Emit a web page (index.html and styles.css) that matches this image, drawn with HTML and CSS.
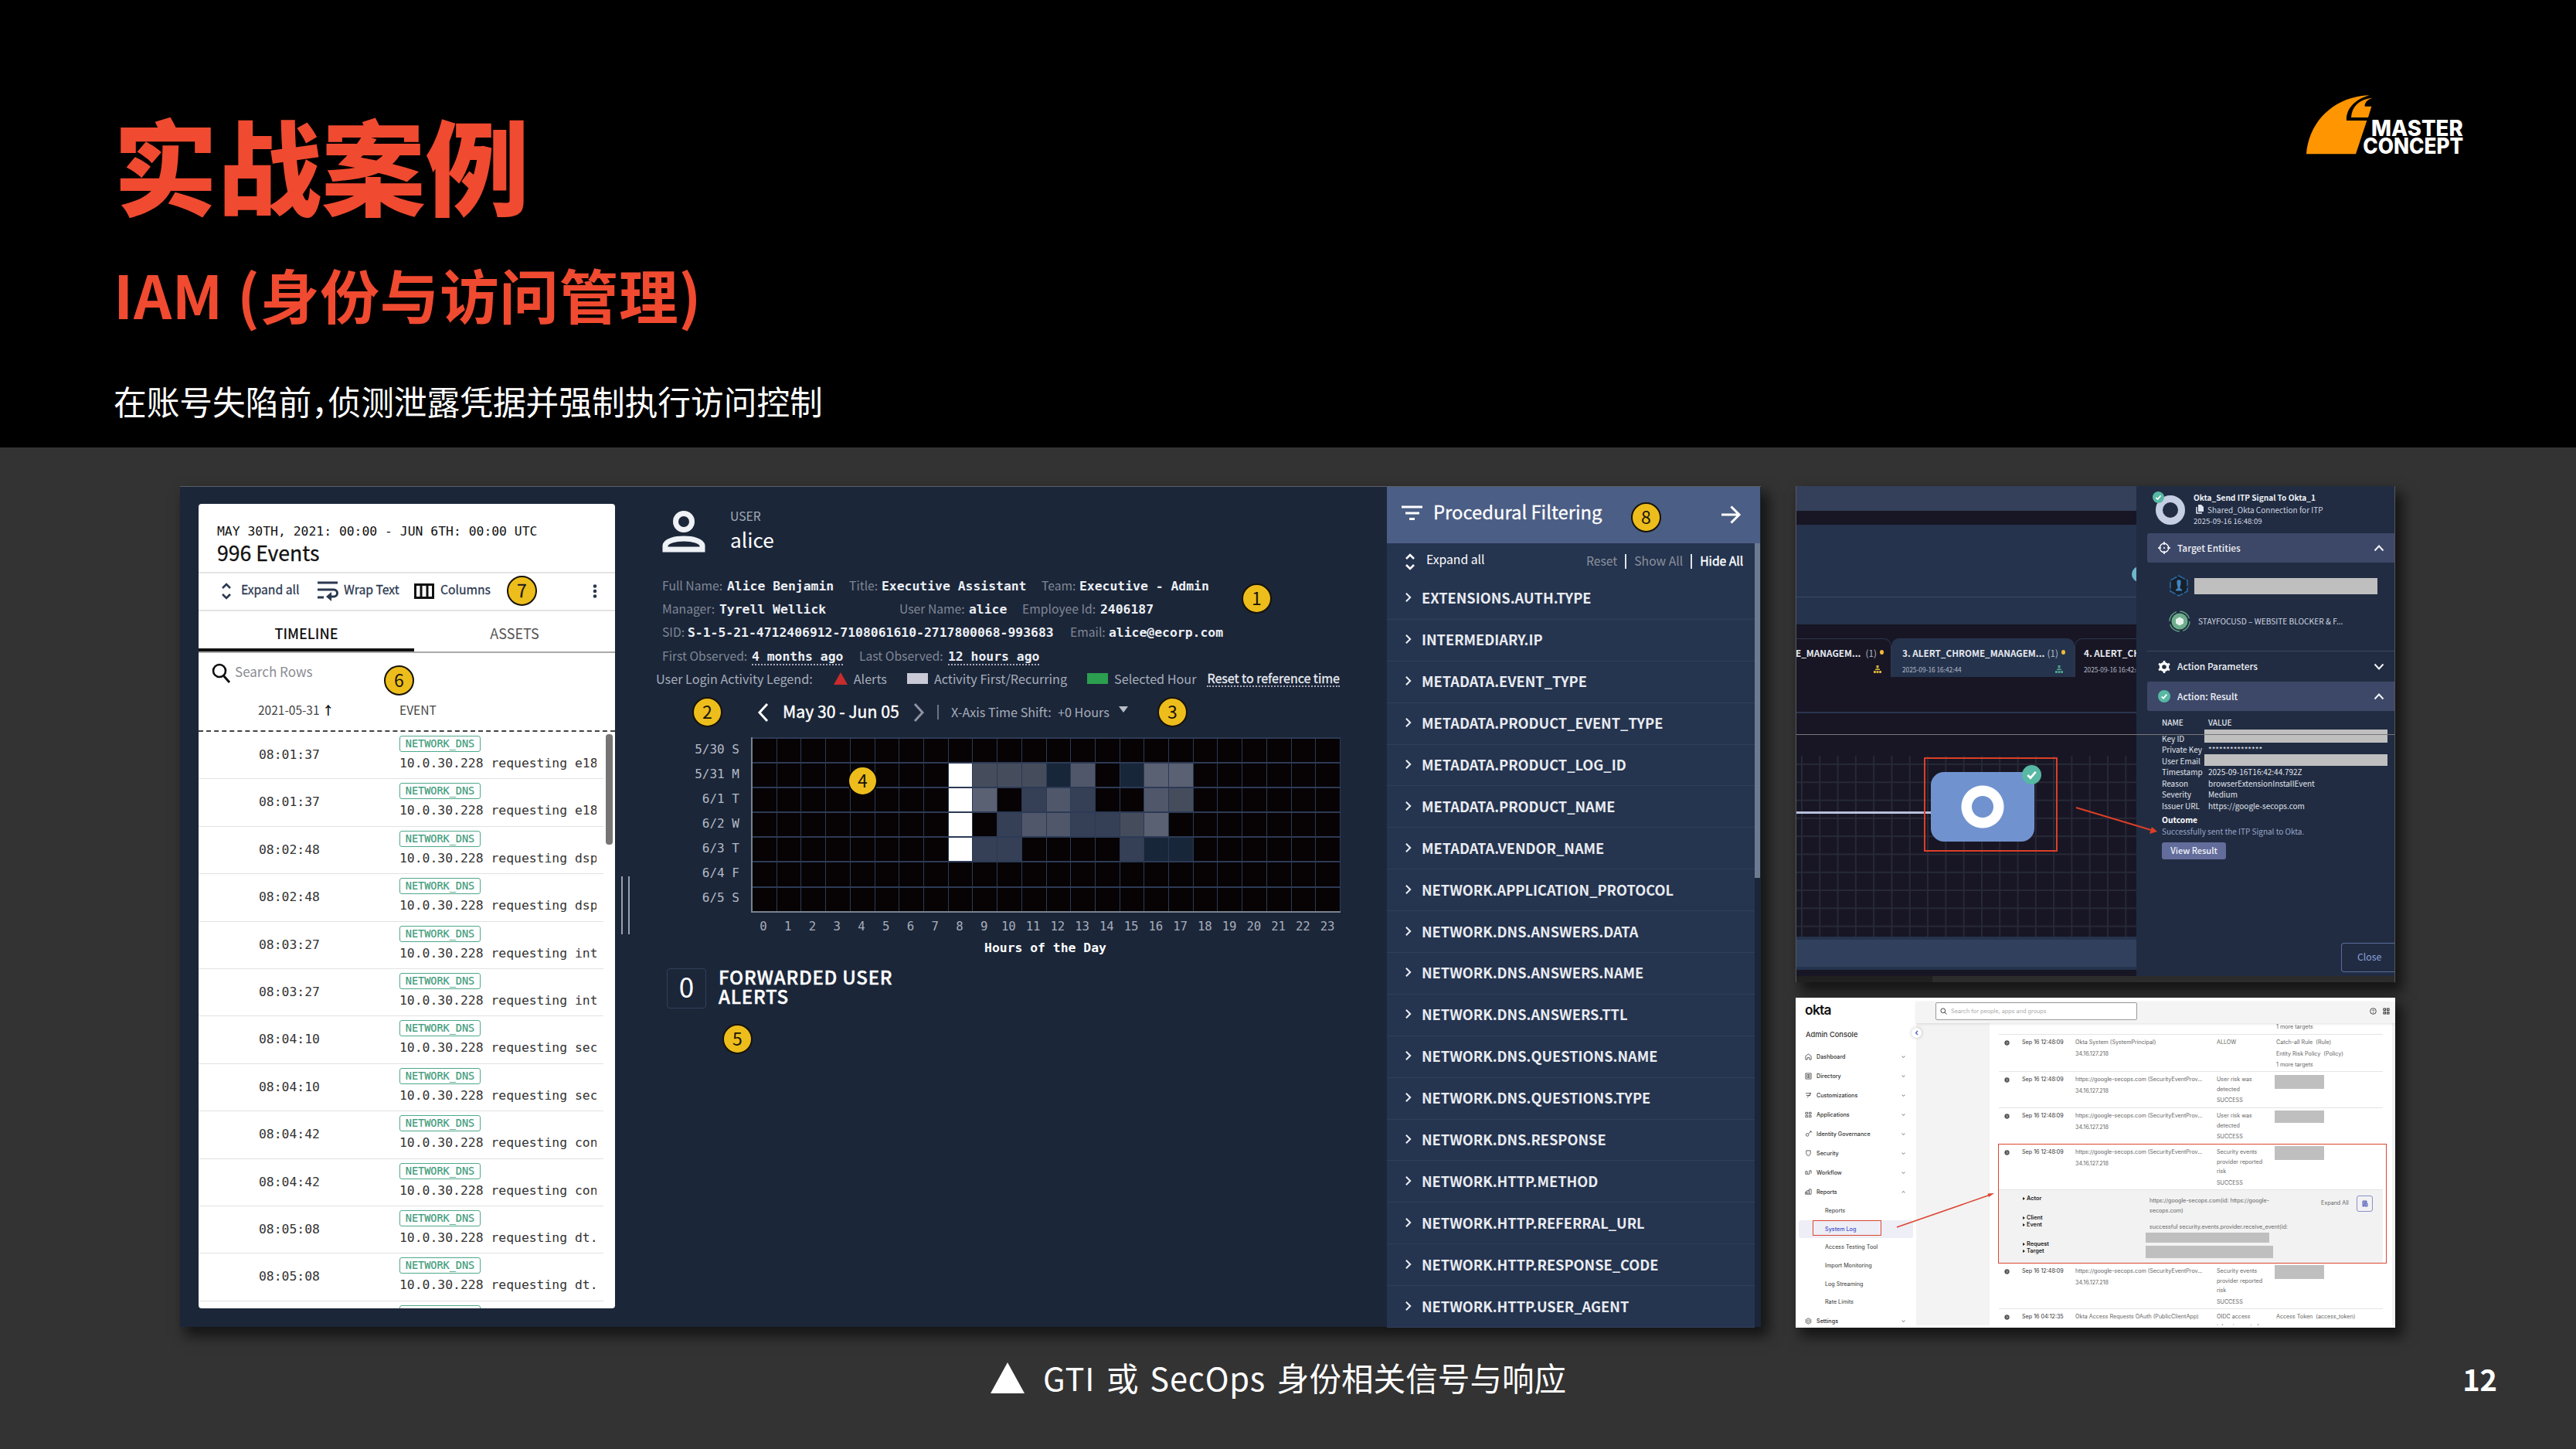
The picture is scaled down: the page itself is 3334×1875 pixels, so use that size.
FILE: index.html
```html
<!DOCTYPE html>
<html lang="zh-CN">
<head>
    <meta charset="UTF-8">
    <meta name="viewport" content="width=device-width, initial-scale=1.0">
    <title>实战案例 - IAM</title>
    <link rel="stylesheet" href="styles.css">
</head>
<body>
    <!-- Shared icons -->
    <svg class="sprite">
        <symbol id="i-expand" viewBox="0 0 14 24"><path d="M2 8l5-5 5 5M2 16l5 5 5-5" fill="none" stroke="currentColor" stroke-width="2.6"/></symbol>
        <symbol id="i-right" viewBox="0 0 10 16"><path d="M2 2l6 6-6 6" fill="none" stroke="currentColor" stroke-width="2.4"/></symbol>
        <symbol id="i-up" viewBox="0 0 14 10"><path d="M1.5 8.5L7 2.5l5.5 6" fill="none" stroke="currentColor" stroke-width="2"/></symbol>
        <symbol id="i-down" viewBox="0 0 14 10"><path d="M1.5 1.5L7 7.5l5.5-6" fill="none" stroke="currentColor" stroke-width="2"/></symbol>
        <symbol id="i-check" viewBox="0 0 24 24"><circle cx="12" cy="12" r="12" fill="#57b8a4"/><path d="M7 12.5l3.5 3.5L17 8.5" fill="none" stroke="#fff" stroke-width="2.6"/></symbol>
        <symbol id="i-tree" viewBox="0 0 10 10"><path d="M3.5 0h3v3h-3zM4.5 3h1v2h-1zM2 4.5h6V6H2zM0 7h2.8v3H0zM3.6 7h2.8v3H3.6zM7.2 7H10v3H7.2z" fill="currentColor"/></symbol>
        <symbol id="i-dot" viewBox="0 0 8 8"><circle cx="4" cy="4" r="3.6" fill="#555"/><path d="M3.3 2.4L5 4 3.3 5.6" fill="none" stroke="#fff" stroke-width=".8"/></symbol>
    </svg>

    <!-- Slide header -->
    <header class="header">
        <div>
            <h1>实战案例</h1>
            <h2>IAM (身份与访问管理)</h2>
            <p>在账号失陷前<span class="comma">，</span>侦测泄露凭据并强制执行访问控制</p>
        </div>
        <svg class="logo" viewBox="0 0 612 231">
            <path d="M0 229C10 100 110 5 245 1C190 15 152 55 156 99H235L192 229Z" fill="#ff9500"/>
            <path d="M174 87C176 45 205 15 258 11C238 17 226 28 227 44H253L240 87Z" fill="#ff9500"/>
            <text x="252" y="160" class="logo-text" textLength="356" lengthAdjust="spacingAndGlyphs">MASTER</text>
            <text x="220" y="229" class="logo-text" textLength="390" lengthAdjust="spacingAndGlyphs">CONCEPT</text>
        </svg>
    </header>

    <main class="stage">
        <!-- User investigation view -->
        <section class="panel user-view">
            <div class="events">
                <div class="events-head">
                    <div class="range">MAY 30TH, 2021: 00:00 - JUN 6TH: 00:00 UTC</div>
                    <div class="count">996 Events</div>
                </div>
                <div class="toolbar">
                    <svg width="14" height="24"><use href="#i-expand"/></svg>
                    <span class="t1">Expand all</span>
                    <svg width="27" height="28" viewBox="0 0 27 28"><path d="M0 3h26M0 12h21a4.5 4.5 0 0 1 0 9h-6M0 22h8" fill="none" stroke="currentColor" stroke-width="3"/><path d="M18 15v12l-7-6z" fill="currentColor"/></svg>
                    <span class="t2">Wrap Text</span>
                    <svg width="26" height="20" viewBox="0 0 26 20"><path d="M1.5 1.5h23v17h-23zM9 1v18M17 1v18" fill="none" stroke="#111" stroke-width="3"/></svg>
                    <span class="t3">Columns</span>
                    <b class="mark">7</b>
                    <svg class="more" width="6" height="18"><circle cx="3" cy="2.5" r="2.3"/><circle cx="3" cy="9" r="2.3"/><circle cx="3" cy="15.5" r="2.3"/></svg>
                </div>
                <div class="tabs"><div class="tab active">TIMELINE</div><div class="tab">ASSETS</div></div>
                <div class="search">
                    <svg width="25" height="27" viewBox="0 0 25 27"><circle cx="10" cy="10" r="8" fill="none" stroke="#111" stroke-width="2.6"/><path d="M15 16l8 9" stroke="#111" stroke-width="3"/></svg>
                    <span>Search Rows</span>
                    <b class="mark mark-6">6</b>
                </div>
                <div class="cols"><span>2021-05-31 <b>↑</b></span><span>EVENT</span></div>
                <div class="event-list" id="event-list"></div>
                <div class="scroll-thumb"></div>
            </div>

            <div class="drag"></div>

            <div class="profile">
                <div class="who">
                    <svg width="56" height="56" viewBox="0 0 56 56"><circle cx="28" cy="14" r="10.5" fill="none" stroke="#eef1f5" stroke-width="7"/><path d="M4 50V45C6 33 50 33 52 45V50Z" fill="none" stroke="#eef1f5" stroke-width="7"/></svg>
                    <div><div class="kind">USER</div><div class="name">alice</div></div>
                </div>
                <div class="facts f1"><i>Full Name:</i><b>Alice Benjamin</b><i>Title:</i><b>Executive Assistant</b><i>Team:</i><b>Executive - Admin</b></div>
                <div class="facts f2"><i>Manager:</i><b>Tyrell Wellick</b><i>User Name:</i><b>alice</b><i>Employee Id:</i><b>2406187</b></div>
                <div class="facts f3"><i>SID:</i><b>S-1-5-21-4712406912-7108061610-2717800068-993683</b><i>Email:</i><b>alice@ecorp.com</b></div>
                <div class="facts f4"><i>First Observed:</i><b><u>4 months ago</u></b><i>Last Observed:</i><b><u>12 hours ago</u></b></div>
                <div class="legend">
                    <span>User Login Activity Legend:</span>
                    <em class="tri"></em><span>Alerts</span>
                    <em class="sq"></em><span>Activity First/Recurring</span>
                    <em class="sq green"></em><span>Selected Hour</span>
                    <u>Reset to reference time</u>
                </div>
                <div class="nav">
                    <b class="mark">2</b>
                    <svg width="16" height="26" viewBox="0 0 16 26"><path d="M13 2L3 13l10 11" fill="none" stroke="#fff" stroke-width="3"/></svg>
                    <span class="week">May 30 - Jun 05</span>
                    <svg width="16" height="26" viewBox="0 0 16 26"><path d="M3 2l10 11L3 24" fill="none" stroke="#8d93a0" stroke-width="3"/></svg>
                    <span class="bar"></span>
                    <span class="shift">X-Axis Time Shift:</span><span class="hours">+0 Hours</span>
                    <em class="caret"></em>
                    <b class="mark">3</b>
                </div>
                <div class="chart">
                    <div class="days"><span>5/30 S</span><span>5/31 M</span><span>6/1 T</span><span>6/2 W</span><span>6/3 T</span><span>6/4 F</span><span>6/5 S</span></div>
                    <div class="heat" id="heat"></div>
                </div>
                <div class="axis" id="axis"></div>
                <div class="axis-title">Hours of the Day</div>
                <div class="alerts"><div class="zero">0</div><div class="alerts-text">FORWARDED USER<br>ALERTS</div></div>
                <b class="mark mark-5">5</b>
                <b class="mark mark-1">1</b>
                <b class="mark mark-4">4</b>
            </div>

            <div class="filters">
                <div class="filters-head">
                    <svg width="28" height="20" viewBox="0 0 28 20"><path d="M0 2h27M5 10h18M10 17.500h7" stroke="#fff" stroke-width="3"/></svg>
                    <span>Procedural Filtering</span>
                    <b class="mark">8</b>
                    <svg class="arrow" width="26" height="24" viewBox="0 0 26 24"><path d="M0 12h23M12.500 1.500L23 12 12.500 22.500" fill="none" stroke="#fff" stroke-width="3"/></svg>
                </div>
                <div class="filters-bar">
                    <svg width="14" height="24"><use href="#i-expand"/></svg>
                    <span class="all">Expand all</span>
                    <span class="dim">Reset</span><s></s><span class="dim">Show All</span><s></s><span class="hide">Hide All</span>
                </div>
                <div id="filter-list"></div>
                <div class="filters-thumb"></div>
            </div>
        </section>

        <div class="side">
            <!-- Playbook view -->
            <section class="panel playbook">
                <div class="flow">
                    <div class="band top"></div>
                    <div class="band gap"></div>
                    <div class="band upper"></div>
                    <div class="band lower"></div>
                    <div class="alert-tabs">
                        <div class="atab first"><div><span>E_MANAGEM...</span><i>(1)</i><em></em></div><div><svg class="yellow" width="10" height="10"><use href="#i-tree"/></svg></div></div>
                        <div class="atab on"><div><span>3. ALERT_CHROME_MANAGEM...</span><i>(1)</i><em></em></div><div><small>2025-09-16 16:42:44</small><svg class="teal" width="10" height="10"><use href="#i-tree"/></svg></div></div>
                        <div class="atab last"><div><span>4. ALERT_CHROME</span></div><div><small>2025-09-16 16:42:44</small></div></div>
                    </div>
                    <div class="canvas-head"></div>
                    <div class="canvas">
                        <div class="wire"></div>
                        <div class="node"><svg class="node-check" width="25" height="25"><use href="#i-check"/></svg></div>
                        <div class="node-frame"></div>
                    </div>
                    <div class="band bottom"></div>
                    <div class="bubble"></div>
                </div>
                <div class="detail">
                    <div class="detail-head">
                        <div class="ring"><svg width="15" height="15"><use href="#i-check"/></svg></div>
                        <div>
                            <strong>Okta_Send ITP Signal To Okta_1</strong>
                            <div class="shared"><svg width="10" height="12" viewBox="0 0 10 12"><path d="M3 0h4l3 3v6H3z" fill="#dfe5f1"/><path d="M1 3v8h7" fill="none" stroke="#dfe5f1" stroke-width="1.500"/></svg>Shared_Okta Connection for ITP</div>
                            <div>2025-09-16 16:48:09</div>
                        </div>
                    </div>
                    <div class="bar-row lit">
                        <svg width="16" height="18" viewBox="0 0 16 18"><circle cx="8" cy="9" r="5.800" fill="none" stroke="#fff" stroke-width="1.400"/><path d="M8 1v4M8 13v4M0 9h4M12 9h4M7 9h2" stroke="#fff" stroke-width="1.600"/></svg>
                        <span>Target Entities</span><svg class="chev" width="14" height="10"><use href="#i-up"/></svg>
                    </div>
                    <div class="entities">
                        <div class="entity">
                            <svg width="26" height="28" viewBox="0 0 26 28"><path d="M13 1l11 6v14l-11 6-11-6V7z" fill="#142233" stroke="#2e6da4" stroke-width="1.500" stroke-dasharray="9 2"/><path d="M13 4l8 4.500v11L13 24l-8-4.500v-11z" fill="#1a2026"/><path d="M10.500 7.500q2.500-2.500 5 0v4l-1.200 5.500 2.700 2v1.500H9V19l2.700-2-1.200-5.500z" fill="#3f86c4"/></svg>
                            <div class="mask m1"></div>
                        </div>
                        <div class="entity">
                            <svg width="28" height="30" viewBox="0 0 28 30"><circle cx="14" cy="15" r="10.500" fill="#6fae8c"/><circle cx="14" cy="15" r="13" fill="none" stroke="#5fa57f" stroke-width="1.400" stroke-dasharray="16 4.400"/><path d="M14 9.500l5 2.800v5.400L14 20.500l-5-2.800v-5.400z" fill="#e6f3ec"/></svg>
                            <span>STAYFOCUSD – WEBSITE BLOCKER &amp; F...</span>
                        </div>
                    </div>
                    <div class="bar-row">
                        <svg width="16" height="18" viewBox="0 0 16 18"><circle cx="8" cy="9" r="4.500" fill="none" stroke="#fff" stroke-width="3.400"/><path d="M8 1v3M8 14v3M1 5l2.600 1.500M12.400 11.500L15 13M1 13l2.600-1.500M12.400 6.500L15 5" stroke="#fff" stroke-width="2.600"/></svg>
                        <span>Action Parameters</span><svg class="chev" width="14" height="10"><use href="#i-down"/></svg>
                    </div>
                    <div class="bar-row lit">
                        <svg width="16" height="16"><use href="#i-check"/></svg>
                        <span>Action: Result</span><svg class="chev" width="14" height="10"><use href="#i-up"/></svg>
                    </div>
                    <div class="kv">
                        <b>NAME</b><b>VALUE</b>
                        <span>Key ID</span><div class="mask m2"></div>
                        <span>Private Key</span><span>***************</span>
                        <span>User Email</span><div class="mask m3"></div>
                        <span>Timestamp</span><span>2025-09-16T16:42:44.792Z</span>
                        <span>Reason</span><span>browserExtensionInstallEvent</span>
                        <span>Severity</span><span>Medium</span>
                        <span>Issuer URL</span><span>https://google-secops.com</span>
                    </div>
                    <div class="outcome">Outcome</div>
                    <div class="sent">Successfully sent the ITP Signal to Okta.</div>
                    <div class="view">View Result</div>
                    <div class="close">Close</div>
                </div>
                <div class="foot"><div></div></div>
                <div class="hair"></div>
                <svg class="pointer p-play" width="110" height="36" viewBox="0 0 110 36"><path d="M1 1l97 29" stroke="#dc3f28" stroke-width="2"/><path d="M106 32l-10 3 3-9z" fill="#dc3f28"/></svg>
            </section>

            <!-- Okta admin console -->
            <section class="panel okta">
                <div class="okta-side">
                    <div class="okta-logo">okta</div>
                    <div class="okta-title">Admin Console</div>
                    <div class="okta-item"><svg viewBox="0 0 10 10"><path d="M1 9V4l4-3 4 3v5H6.500V6h-3v3z"/></svg>Dashboard<svg viewBox="0 0 10 10"><path d="M3 4l2 2 2-2"/></svg></div>
                    <div class="okta-item"><svg viewBox="0 0 10 10"><path d="M1 1h8v8H1zM3 3h4v4H3zM5 3v4"/></svg>Directory<svg viewBox="0 0 10 10"><path d="M3 4l2 2 2-2"/></svg></div>
                    <div class="okta-item"><svg viewBox="0 0 10 10"><path d="M1 2h8L3 8M2 5h6M7 1v2"/></svg>Customizations<svg viewBox="0 0 10 10"><path d="M3 4l2 2 2-2"/></svg></div>
                    <div class="okta-item"><svg viewBox="0 0 10 10"><path d="M1 1.500h3v2.500H1zM6 1.500h3v2.500H6zM1 6h3v2.500H1zM6 6h3v2.500H6z"/></svg>Applications<svg viewBox="0 0 10 10"><path d="M3 4l2 2 2-2"/></svg></div>
                    <div class="okta-item"><svg viewBox="0 0 10 10"><circle cx="3.500" cy="6" r="2"/><path d="M5 4.500L9 1M7 1h2v2"/></svg>Identity Governance<svg viewBox="0 0 10 10"><path d="M3 4l2 2 2-2"/></svg></div>
                    <div class="okta-item"><svg viewBox="0 0 10 10"><path d="M2 1h6v4Q8 7.500 5 8.500 2 7.500 2 5z"/></svg>Security<svg viewBox="0 0 10 10"><path d="M3 4l2 2 2-2"/></svg></div>
                    <div class="okta-item"><svg viewBox="0 0 10 10"><path d="M1 7V3h2.500v4h3V2H9v4M1 7h2"/></svg>Workflow<svg viewBox="0 0 10 10"><path d="M3 4l2 2 2-2"/></svg></div>
                    <div class="okta-item"><svg viewBox="0 0 10 10"><path d="M.5 8V5H3v3zM3 8V3h3v5zM6 8V1h3v7z"/></svg>Reports<svg viewBox="0 0 10 10"><path d="M3 6l2-2 2 2"/></svg></div>
                    <div class="okta-sub">Reports</div>
                    <div class="okta-sub on">System Log</div>
                    <div class="okta-sub">Access Testing Tool</div>
                    <div class="okta-sub">Import Monitoring</div>
                    <div class="okta-sub">Log Streaming</div>
                    <div class="okta-sub">Rate Limits</div>
                    <div class="okta-item"><svg viewBox="0 0 10 10"><path d="M5 .8l3.600 2.100v4.200L5 9.200 1.400 7.100V2.900z"/><circle cx="5" cy="5" r="1.700"/></svg>Settings<svg viewBox="0 0 10 10"><path d="M3 4l2 2 2-2"/></svg></div>
                </div>
                <div class="okta-main">
                    <div class="okta-top">
                        <div class="okta-search"><svg width="9" height="9" viewBox="0 0 9 9"><circle cx="3.800" cy="3.800" r="2.900" fill="none" stroke="#444"/><path d="M6 6l2.500 2.500" stroke="#444"/></svg>Search for people, apps and groups</div>
                        <svg class="help" width="9" height="9" viewBox="0 0 9 9"><circle cx="4.500" cy="4.500" r="3.800" fill="none" stroke="#333" stroke-width=".9"/><path d="M3.300 3.500q1.200-1.500 2.400 0 0 .8-1.200 1.500M4.500 6v1" fill="none" stroke="#333" stroke-width=".8"/></svg>
                        <svg width="9" height="9" viewBox="0 0 9 9"><path d="M1 1h2.500v2.500H1zM5.500 1H8v2.500H5.500zM1 5.500h2.500V8H1zM5.500 5.500H8V8H5.500z" fill="none" stroke="#333" stroke-width="1.100"/></svg>
                    </div>
                    <div class="log">
                        <div class="log-row r0"><div></div><div></div><div></div><div></div><div>1 more targets</div></div>
                        <div class="log-row r1"><svg><use href="#i-dot"/></svg><time>Sep 16 12:48:09</time><div class="wide">Okta System (SystemPrincipal)<br>34.16.127.218</div><div>ALLOW</div><div class="wide">Catch-all Rule&nbsp; (Rule)<br>Entity Risk Policy&nbsp; (Policy)<br>1 more targets</div></div>
                        <div class="log-row r2"><svg><use href="#i-dot"/></svg><time>Sep 16 12:48:09</time><div class="wide">https://google-secops.com (SecurityEventProv...<br>34.16.127.218</div><div>User risk was<br>detected<p>SUCCESS</p></div><div class="mask h18"></div></div>
                        <div class="log-row r3"><svg><use href="#i-dot"/></svg><time>Sep 16 12:48:09</time><div class="wide">https://google-secops.com (SecurityEventProv...<br>34.16.127.218</div><div>User risk was<br>detected<p>SUCCESS</p></div><div class="mask h16"></div></div>
                        <div class="log-row r4"><svg><use href="#i-dot"/></svg><time>Sep 16 12:48:09</time><div class="wide">https://google-secops.com (SecurityEventProv...<br>34.16.127.218</div><div>Security events<br>provider reported<br>risk<p>SUCCESS</p></div><div class="mask h18 raised"></div></div>
                        <div class="log-detail">
                            <div class="keys"><b>Actor</b><b class="far">Client</b><b>Event</b><b class="far">Request</b><b>Target</b></div>
                            <div class="vals">https://google-secops.com(id: https://google-<br>secops.com)<p>successful security.events.provider.receive_event(id:</p><div class="mask v1"></div><div class="mask v2"></div></div>
                            <span>Expand All</span>
                            <div class="copy"><svg width="8" height="9" viewBox="0 0 8 9"><path d="M1 1h5v2H3v5H1zM4 4h3v4H4z" fill="#a9afe0" stroke="#3f4db0" stroke-width=".8"/></svg></div>
                        </div>
                        <div class="log-row r5"><svg><use href="#i-dot"/></svg><time>Sep 16 12:48:09</time><div class="wide">https://google-secops.com (SecurityEventProv...<br>34.16.127.218</div><div>Security events<br>provider reported<br>risk<p>SUCCESS</p></div><div class="mask h18 raised"></div></div>
                        <div class="log-row r6"><svg><use href="#i-dot"/></svg><time>Sep 16 04:12:35</time><div class="wide">Okta Access Requests OAuth (PublicClientApp)</div><div>OIDC access<br>token is granted</div><div>Access Token&nbsp; (access_token)</div></div>
                    </div>
                </div>
                <div class="collapse"><svg width="5" height="7" viewBox="0 0 5 7"><path d="M4 1L1.500 3.500 4 6" fill="none" stroke="#3f59c4" stroke-width="1.200"/></svg></div>
                <div class="frame f-log"></div>
                <div class="frame f-menu"></div>
                <svg class="pointer p-okta" width="128" height="46" viewBox="0 0 128 46"><path d="M1 45L122 3" stroke="#dc4632" stroke-width="1.600"/><path d="M127 1l-7 5-1.500-4.500z" fill="#dc4632"/></svg>
            </section>
        </div>
    </main>

    <footer class="footer">
        <div class="caption"><svg width="46" height="42" viewBox="0 0 46 42"><path d="M23 1L45 41H1z" fill="#fff"/></svg><div><span>GTI</span> 或 <span>SecOps</span> 身份相关信号与响应</div></div>
        <div class="page">12</div>
    </footer>

    <script>
        const events = [
            ['08:01:37', 'e18'], ['08:01:37', 'e18'], ['08:02:48', 'dsp'], ['08:02:48', 'dsp'],
            ['08:03:27', 'int'], ['08:03:27', 'int'], ['08:04:10', 'sec'], ['08:04:10', 'sec'],
            ['08:04:42', 'con'], ['08:04:42', 'con'], ['08:05:08', 'dt.'], ['08:05:08', 'dt.']
        ];

        const filters = [
            'EXTENSIONS.AUTH.TYPE', 'INTERMEDIARY.IP', 'METADATA.EVENT_TYPE', 'METADATA.PRODUCT_EVENT_TYPE',
            'METADATA.PRODUCT_LOG_ID', 'METADATA.PRODUCT_NAME', 'METADATA.VENDOR_NAME',
            'NETWORK.APPLICATION_PROTOCOL', 'NETWORK.DNS.ANSWERS.DATA', 'NETWORK.DNS.ANSWERS.NAME',
            'NETWORK.DNS.ANSWERS.TTL', 'NETWORK.DNS.QUESTIONS.NAME', 'NETWORK.DNS.QUESTIONS.TYPE',
            'NETWORK.DNS.RESPONSE', 'NETWORK.HTTP.METHOD', 'NETWORK.HTTP.REFERRAL_URL',
            'NETWORK.HTTP.RESPONSE_CODE', 'NETWORK.HTTP.USER_AGENT'
        ];

        // activity level per hour, 0 = none, 6 = first seen
        const levels = [
            '000000000000000000000000',
            '000000006333140155000000',
            '000000006502420043000000',
            '000000006024422350000000',
            '000000006220000211000000',
            '000000000000000000000000',
            '000000000000000000000000'
        ];

        document.getElementById('event-list').innerHTML = events.map(e => `
            <div class="event">
                <time>${e[0]}</time>
                <div><span class="tag">NETWORK_DNS</span><p>10.0.30.228 requesting ${e[1]}</p></div>
            </div>`).join('') + '<div class="event"><time></time><div><span class="tag"></span></div></div>';

        document.getElementById('filter-list').innerHTML = filters.map(f => `
            <div class="filter"><svg width="9" height="14"><use href="#i-right"/></svg>${f}</div>`).join('');

        document.getElementById('heat').innerHTML = levels.join('').split('').map(l => `<i class="l${l}"></i>`).join('');
        document.getElementById('axis').innerHTML = levels[0].split('').map((l, i) => `<span>${i}</span>`).join('');
    </script>
</body>
</html>
```
FILE: styles.css
```css
* {
    box-sizing: border-box;
}
body {
    margin: 0;
    width: 3334px;
    height: 1875px;
    overflow: hidden;
    background: #333;
    color: #fff;
    font-family: "Noto Sans CJK SC", sans-serif;
}
h1, h2, p {
    margin: 0;
}
i, em {
    font-style: normal;
}
svg {
    display: block;
    flex: none;
}
.sprite {
    position: absolute;
    width: 0;
    height: 0;
}

/* header */
.header {
    display: flex;
    justify-content: space-between;
    height: 579px;
    padding: 121px 145px 0 147px;
    background: #000;
}
h1 {
    font-size: 134.5px;
    line-height: 180px;
    font-weight: 900;
    color: #f04a30;
}
h2 {
    margin-top: 19px;
    font-size: 76.7px;
    line-height: 120px;
    font-weight: 700;
    letter-spacing: .7px;
    color: #f04a30;
}
.header p {
    margin-top: 48px;
    font-size: 42.7px;
    line-height: 60px;
}
.comma {
    letter-spacing: -0.5em;
}
.logo {
    width: 204px;
    height: 77px;
    margin-top: 2px;
}
.logo-text {
    font-family: Inter, sans-serif;
    font-weight: 800;
    font-size: 84px;
    fill: #fff;
}

/* panels */
.stage {
    display: flex;
    gap: 45px;
    padding: 50px 0 0 233px;
    height: 1140px;
}
.panel {
    position: relative;
    display: flex;
    box-shadow: 8px 10px 16px 2px rgba(0, 0, 0, .6);
}
.user-view {
    width: 2046px;
    height: 1088px;
    padding: 22px 0 0 24px;
    background: #1b2639;
    border-top: 1px solid #5c6068;
}
.mark {
    display: block;
    flex: none;
    width: 39px;
    height: 39px;
    border: 2px solid #171308;
    border-radius: 50%;
    background: #edbd1c;
    color: #171308;
    font-size: 23px;
    line-height: 32px;
    font-weight: 400;
    text-align: center;
}

/* event list */
.events {
    position: relative;
    width: 539px;
    height: 1041px;
    background: #fff;
    border-radius: 4px;
    color: #111;
    overflow: hidden;
}
.events-head {
    height: 90px;
    padding: 23px 24px 0;
    border-bottom: 2px solid #e3e3e3;
}
.range {
    font: 16.4px/26px "DejaVu Sans Mono", monospace;
}
.count {
    font-size: 26.6px;
    line-height: 26px;
    margin-top: 1px;
    -webkit-text-stroke: .3px #111;
}
.toolbar {
    display: flex;
    align-items: center;
    height: 49px;
    padding: 0 23px 2px 29px;
    border-bottom: 2px solid #e3e3e3;
    font-size: 15.7px;
    line-height: 20px;
    color: #2b3850;
    -webkit-text-stroke: .3px #2b3850;
}
.toolbar span {
    margin-top: -3px;
}
.toolbar .t1 { margin-left: 12px; width: 99px; }
.toolbar .t2 { margin-left: 7px; width: 91px; }
.toolbar .t3 { margin-left: 8px; width: 86px; }
.more {
    margin-left: auto;
    fill: #2b3850;
}
.tabs {
    display: flex;
    height: 54px;
    border-bottom: 2px solid #aaa;
}
.tab {
    width: 260px;
    font-size: 18px;
    line-height: 56px;
    text-align: center;
    color: #555;
}
.tab.active {
    width: 279px;
    height: 52px;
    border-bottom: 4px solid #111;
    color: #111;
    font-weight: 500;
}
.search {
    position: relative;
    display: flex;
    height: 50px;
    padding: 13px 0 0 17px;
    gap: 5px;
    font-size: 17px;
    line-height: 22px;
    color: #8a8c93;
}
.mark-6 {
    position: absolute;
    left: 240px;
    top: 16px;
}
.cols {
    display: grid;
    grid-template-columns: 183px auto;
    height: 52px;
    padding: 11px 0 0 77px;
    border-bottom: 2px dashed #444;
    font-size: 15.5px;
    line-height: 24px;
    color: #444;
}
.cols b {
    color: #111;
}
.event {
    display: flex;
    width: 524px;
    height: 61.4px;
    border-bottom: 1px solid #e2e2e2;
    font: 16.4px/20px "DejaVu Sans Mono", monospace;
    color: #333;
}
.event time {
    width: 260px;
    padding: 20px 0 0 78px;
}
.event div {
    width: 255px;
    padding-top: 5px;
    overflow: hidden;
    white-space: nowrap;
}
.tag {
    display: block;
    width: 105px;
    height: 21px;
    border: 1.5px solid #4fa88a;
    border-radius: 3px;
    font-size: 13.5px;
    line-height: 19px;
    text-align: center;
    color: #3f9c7c;
    -webkit-text-stroke: .2px #3f9c7c;
}
.event p {
    margin-top: 5px;
}
.scroll-thumb {
    position: absolute;
    right: 3px;
    top: 298px;
    width: 9px;
    height: 143px;
    border-radius: 4px;
    background: #757575;
}
.drag {
    width: 11px;
    height: 75px;
    margin: 482px 32px 0 8px;
    border: solid #99a0ad;
    border-width: 0 2px;
}

/* profile */
.profile {
    position: relative;
    width: 948px;
    padding-left: 10px;
    font-size: 15.7px;
}
.who {
    display: flex;
    gap: 32px;
    height: 95px;
    padding-top: 9px;
}
.kind {
    line-height: 14px;
    color: #a3a9b4;
}
.name {
    margin-top: 8px;
    font-size: 26.3px;
    line-height: 30px;
}
.facts {
    display: grid;
    height: 30.2px;
    line-height: 22px;
    white-space: nowrap;
}
.facts i {
    color: #808896;
}
.facts b {
    font: bold 16.4px/24px "DejaVu Sans Mono", monospace;
    color: #eceff4;
}
.facts u, .legend u {
    text-decoration: none;
    border-bottom: 2px dotted #aab;
}
.f1 { grid-template-columns: 84px 158px 42px 207px 49px auto; }
.f2 { grid-template-columns: 74px 233px 90px 69px 101px auto; }
.f3 { grid-template-columns: 33px 495px 50px auto; }
.f4 { grid-template-columns: 116px 139px 115px auto; }
.legend {
    display: flex;
    align-items: center;
    height: 24px;
    margin: -2px 0 0 -8px;
    font-size: 16.2px;
    line-height: 20px;
    color: #a7adb9;
    white-space: nowrap;
}
.tri {
    margin: 0 8px 0 27px;
    border: solid transparent;
    border-width: 0 9.5px 16px;
    border-bottom-color: #c92c2c;
}
.sq {
    width: 27px;
    height: 14px;
    margin: 0 8px 0 26px;
    background: #c9cad6;
}
.green {
    background: #2b9f4f;
}
.legend u {
    margin-left: 14px;
    color: #eceff4;
    font-size: 16px;
    -webkit-text-stroke: .3px #eceff4;
}
.nav {
    display: flex;
    align-items: center;
    height: 40px;
    margin-top: 12px;
    padding-left: 39px;
}
.nav svg {
    margin-left: 45px;
}
.week {
    width: 155px;
    margin: -3px 0 0 17px;
    font-size: 21.2px;
    line-height: 30px;
    white-space: nowrap;
    -webkit-text-stroke: .4px #fff;
}
.nav .week + svg {
    margin-left: 13px;
}
.bar {
    width: 2px;
    height: 19px;
    margin: 0 16px;
    background: #6d7584;
}
.shift, .hours {
    margin-top: -2px;
    font-size: 16.2px;
    color: #a7adb9;
    width: 138px;
    white-space: nowrap;
}
.hours {
    width: 79px;
}
.caret {
    margin: -8px 38px 0 0;
    border: solid transparent;
    border-width: 8px 6.5px 0;
    border-top-color: #b9bec8;
}
.chart {
    display: flex;
    margin-top: 12px;
}
.days {
    display: flex;
    flex-direction: column;
    width: 115px;
    padding-right: 15px;
    text-align: right;
    font: 16px/32.1px "DejaVu Sans Mono", monospace;
    color: #b4bac4;
}
.heat {
    display: grid;
    grid-template-columns: repeat(24, 1fr);
    width: 763px;
    height: 227px;
    border: solid #7b828e;
    border-width: 0 0 2px 2px;
}
.heat i {
    background: #070304;
    border: solid #2c3a55;
    border-width: 2px 1px 0 0;
}
.heat .l1 { background: #18263a; }
.heat .l2 { background: #353f55; }
.heat .l3 { background: #454c5c; }
.heat .l4 { background: #50576a; }
.heat .l5 { background: #5a6173; }
.heat .l6 { background: #fff; }
.axis {
    display: grid;
    grid-template-columns: repeat(24, 1fr);
    margin-left: 115px;
    width: 762px;
    padding-top: 6px;
    text-align: center;
    font: 15.7px/24px "DejaVu Sans Mono", monospace;
    color: #a7adb9;
}
.axis-title {
    margin: 2px 0 0 115px;
    width: 762px;
    text-align: center;
    font: bold 16.4px/28px "DejaVu Sans Mono", monospace;
}
.alerts {
    display: flex;
    gap: 16px;
    margin: 12px 0 0 6px;
}
.zero {
    width: 51px;
    height: 52px;
    border: 1.5px solid #33405a;
    border-radius: 4px;
    font-size: 35px;
    line-height: 44px;
    text-align: center;
}
.alerts-text {
    margin-top: -2px;
    font-size: 24px;
    line-height: 25.7px;
    font-weight: 500;
    letter-spacing: .75px;
    -webkit-text-stroke: .4px #fff;
}
.mark-1 { position: absolute; left: 760px; top: 103px; }
.mark-4 { position: absolute; left: 250px; top: 339px; border-color: #070304; }
.mark-5 { position: absolute; left: 88px; top: 673px; }

/* procedural filtering */
.filters {
    position: relative;
    width: 483px;
    height: 1087px;
    margin-top: -22px;
    background: #25344f;
    border-right: 7px solid #1b2639;
}
.filters-head {
    display: flex;
    align-items: center;
    width: 483px;
    height: 73px;
    padding: 0 24px 5px 19px;
    background: #4b5e85;
}
.filters-head span {
    margin: -4px 0 0 13px;
    width: 256px;
    font-size: 23.8px;
    line-height: 34px;
    -webkit-text-stroke: .3px #fff;
}
.filters-head .mark {
    margin-top: 11px;
}
.arrow {
    margin: 4px 0 0 auto;
}
.filters-bar {
    display: flex;
    align-items: center;
    height: 45px;
    padding: 2px 0 0 23px;
    font-size: 15.7px;
    line-height: 20px;
}
.filters-bar span {
    margin-top: -2px;
}
.filters-bar .all {
    margin: -6px 0 0 14px;
    width: 207px;
}
.hide {
    -webkit-text-stroke: .4px #fff;
}
.dim {
    color: #8a919d;
}
.filters-bar s {
    width: 2px;
    height: 19px;
    margin: 0 10px;
    background: #dfe3ea;
}
.filter {
    display: flex;
    align-items: center;
    gap: 13px;
    height: 53.9px;
    padding: 0 0 2px 23px;
    border-bottom: 1.5px solid #304059;
    font-size: 18.2px;
    line-height: 24px;
    font-weight: 700;
    color: #e9ecf2;
}
.filters-thumb {
    position: absolute;
    right: -7px;
    top: 73px;
    width: 7px;
    height: 433px;
    background: #6c7b91;
}

/* right column */
.side {
    width: 776px;
}
.mask {
    background: #bfbfbf;
}
.playbook {
    flex-wrap: wrap;
    height: 642px;
    border: solid #55595f;
    border-width: 0 1px;
    overflow: visible;
    background: #212c42;
}
.flow {
    position: relative;
    width: 440px;
    height: 634px;
    background: #181624;
    overflow: hidden;
}
.top { height: 32px; background: #343f5a; }
.gap { height: 18px; }
.upper { height: 94px; background: #25334d; border-bottom: 1px solid #3b4a67; }
.lower { height: 35px; background: #25334d; }
.alert-tabs {
    display: flex;
    height: 68px;
    padding-top: 18px;
}
.atab {
    flex: none;
    width: 237px;
    height: 50px;
    padding: 6px 11px 0 13px;
    border: 1px solid #29364f;
    border-bottom: 0;
    border-radius: 10px 10px 0 0;
    color: #e6e9f0;
}
.atab.first {
    width: 124px;
    padding: 6px 9px 0 0;
    margin-left: -1px;
    border-left: 0;
    border-radius: 0 10px 0 0;
}
.atab.last {
    padding-left: 11px;
}
.atab.on {
    background: #25334d;
}
.atab div {
    display: flex;
    align-items: center;
    height: 22px;
    font-size: 11.7px;
    font-weight: 700;
    white-space: nowrap;
}
.atab div + div {
    justify-content: space-between;
    padding-right: 3px;
}
.atab i {
    margin-left: auto;
    font-weight: 400;
    color: #b4bac8;
}
.atab em {
    width: 5px;
    height: 6px;
    margin-left: 4px;
    border-radius: 50%;
    background: #f0b93a;
}
.atab small {
    font-size: 8.3px;
    font-weight: 400;
    color: #b4bac8;
}
.yellow { color: #d9b13b; margin-left: auto; }
.teal { color: #4f9f8d; }
.canvas-head {
    height: 102px;
    background: linear-gradient(#2b3650, #2b3650) 0 45px / 100% 2px no-repeat;
}
.canvas {
    position: relative;
    height: 234px;
    background-image: linear-gradient(90deg, #262936 2px, transparent 2px), linear-gradient(#262936 2px, transparent 2px);
    background-size: 23.3px 23.3px;
    background-position: 6px 10px;
}
.wire {
    position: absolute;
    left: 0;
    top: 72px;
    width: 178px;
    height: 3px;
    background: #b7bfdc;
}
.node {
    position: absolute;
    left: 174px;
    top: 21px;
    width: 134px;
    height: 90px;
    border-radius: 17px;
    background: radial-gradient(circle, #7093cf 13.5px, #fff 14.5px, #fff 27px, #7093cf 28px);
}
.node-check {
    position: absolute;
    right: -9px;
    top: -9px;
}
.node-frame {
    position: absolute;
    left: 165px;
    top: 2px;
    width: 173px;
    height: 122px;
    border: 2px solid #dc3f28;
}
.bottom {
    height: 43px;
    background: #31405c;
    border-top: 4px solid #25334d;
    border-bottom: 4px solid #25334d;
}
.bubble {
    position: absolute;
    right: -14px;
    top: 104px;
    width: 20px;
    height: 20px;
    border-radius: 50%;
    background: #6fb7c9;
}
.detail {
    width: 334px;
    height: 634px;
    background: #212c42;
    font-size: 10px;
    color: #cfd5e1;
}
.detail-head {
    display: flex;
    gap: 11px;
    height: 61px;
    padding: 7px 0 0 25px;
    font-size: 10px;
    line-height: 15.5px;
}
.detail-head > div:last-child > div:last-child {
    font-size: 9.6px;
}
.ring {
    position: relative;
    width: 38px;
    height: 38px;
    margin-top: 5px;
    border: 9.5px solid #c5cee2;
    border-radius: 50%;
}
.ring svg {
    position: absolute;
    left: -13px;
    top: -14px;
}
.detail-head strong {
    display: block;
    font-size: 10.1px;
    color: #eef1f6;
}
.shared {
    display: flex;
    align-items: center;
    gap: 5px;
    padding-left: 3px;
}
.bar-row {
    display: flex;
    align-items: center;
    gap: 9px;
    height: 39px;
    margin-left: 14px;
    padding: 0 13px 0 14px;
    font-size: 11.9px;
    font-weight: 500;
    color: #f1f3f8;
}
.bar-row.lit {
    height: 38px;
    background: #3d4868;
    border-radius: 3px 0 0 3px;
}
.bar-row span {
    margin-top: -2px;
}
.chev {
    margin-left: auto;
}
.entities {
    height: 115px;
    margin-left: 14px;
    padding: 15px 0 0 29px;
    border-bottom: 1px solid #3b4663;
}
.entity {
    display: flex;
    align-items: center;
    gap: 10px;
    height: 30px;
    margin-left: -1px;
    margin-bottom: 16px;
    font-size: 10.2px;
    white-space: nowrap;
}
.entity span {
    margin-top: -1px;
}
.m1 {
    width: 237px;
    height: 21px;
    margin-left: -3px;
}
.kv {
    display: grid;
    grid-template-columns: 60px 180px;
    grid-template-rows: 26px;
    grid-auto-rows: 14.45px;
    height: 128px;
    padding: 0 0 0 33px;
    line-height: 19px;
    color: #e0e4ec;
}
.kv b {
    font-weight: 500;
    line-height: 29px;
}
.kv .mask {
    width: 237px;
    height: 17px;
    margin-left: -5px;
    margin-top: -2px;
}
.kv .m3 {
    height: 15px;
    margin-top: 1px;
}
.outcome {
    margin: 5px 0 0 33px;
    font-size: 10.3px;
    line-height: 16px;
    font-weight: 700;
    color: #fff;
}
.sent {
    margin-left: 33px;
    line-height: 13px;
    color: #9aa6c8;
}
.view {
    width: 83px;
    height: 22px;
    margin: 8px 0 0 33px;
    border-radius: 3px;
    background: #636d9b;
    color: #f1f3f8;
    font-size: 11px;
    line-height: 20px;
    text-align: center;
    font-weight: 500;
}
.close {
    width: 69px;
    height: 38px;
    margin: 108px 0 0 auto;
    padding-left: 20px;
    border: 1.5px solid #5b6b9d;
    border-right: 0;
    border-radius: 4px 0 0 4px;
    color: #8aa0dc;
    font-size: 12.3px;
    line-height: 35px;
}
.foot {
    width: 774px;
    height: 8px;
    background: #2c2c2c;
}
.foot div {
    width: 176px;
    height: 8px;
    background: #202020;
}
.hair {
    position: absolute;
    left: 0;
    top: 321px;
    width: 774px;
    height: 1px;
    background: #777;
}
.pointer {
    position: absolute;
}
.p-play { left: 361px; top: 415px; }
.p-okta { left: 130px; top: 252px; }

/* okta console */
.okta {
    height: 427px;
    margin-top: 20px;
    padding: 5px 0 3px;
    background: #fff;
    font-family: Inter, sans-serif;
    font-size: 7.15px;
    color: #666;
}
.okta-side {
    width: 156px;
    padding: 0 4px;
    color: #333;
    overflow: hidden;
}
.okta-logo {
    padding: 1px 0 0 8px;
    font-family: Inter, sans-serif;
    font-size: 17.4px;
    line-height: 20px;
    font-weight: 600;
    letter-spacing: -.7px;
    color: #111;
}
.okta-title {
    padding: 12px 0 7px 9px;
    font-size: 9.3px;
    line-height: 19px;
    font-weight: 500;
}
.okta-item {
    display: flex;
    align-items: center;
    gap: 6px;
    height: 25.05px;
    padding: 0 8px;
    font-size: 7.2px;
    font-weight: 500;
}
.okta-item svg {
    width: 9px;
    height: 9px;
    fill: none;
    stroke: #444;
    stroke-width: .9;
}
.okta-item svg:last-child {
    margin-left: auto;
}
.okta-sub {
    height: 23.55px;
    padding-left: 34px;
    font-size: 7.2px;
    line-height: 23.5px;
}
.okta-sub.on {
    background: #eeeef7;
    border-radius: 3px;
    color: #4452c4;
    font-weight: 500;
}
.okta-main {
    width: 620px;
    padding-right: 4px;
    background: #f3f3f3;
}
.okta-top {
    position: relative;
    display: flex;
    align-items: center;
    gap: 8px;
    width: 620px;
    height: 28px;
    padding: 0 7px 4px 25px;
    background: #f4f4f4;
    box-shadow: 0 1px 3px rgba(0, 0, 0, .12);
}
.okta-search {
    display: flex;
    align-items: center;
    gap: 5px;
    width: 261px;
    height: 23px;
    padding-left: 5px;
    border: 1px solid #999;
    border-radius: 2px;
    background: #fff;
    font-size: 7.3px;
    color: #aaa;
}
.help {
    margin-left: auto;
}
.log {
    height: 391px;
    margin-left: 95px;
    padding: 0 12px;
    background: #fff;
    overflow: hidden;
}
.log-row {
    display: grid;
    grid-template-columns: 30px 69px 183px 77px 62px;
    align-items: start;
    padding: 4px 0 0;
    border-bottom: 1px solid #e4e4e4;
    line-height: 12.5px;
    white-space: nowrap;
}
.log-row svg {
    width: 7px;
    height: 7px;
    margin: 3px 0 0 7px;
}
.log-row time {
    color: #333;
}
.log-row p {
    line-height: 14px;
    padding-top: 1px;
}
.log-row .wide {
    line-height: 14.5px;
    margin-top: -1px;
}
.r0 { height: 15px; padding: 0; }
.r0 div { margin-top: -1px; }
.r1 { height: 48px; }
.r2 { height: 47px; }
.r3 { height: 47px; }
.r4 { height: 59px; }
.r5 { height: 59px; }
.r6 { height: 40px; }
.h18 { height: 18px; margin-left: -2px; }
.h16 { height: 16px; margin: -1px 0 0 -2px; }
.raised { margin-top: -2px; }
.log-detail {
    display: flex;
    height: 95px;
    padding: 7px 13px 0 31px;
    background: #f2f2f2;
}
.keys {
    width: 164px;
    color: #222;
    font-size: 7.3px;
    line-height: 8.9px;
    font-weight: 600;
}
.keys b {
    display: flex;
    align-items: center;
    gap: 2px;
    font-weight: 600;
}
.keys b::before {
    content: "";
    border: solid transparent;
    border-width: 2px 0 2px 3.5px;
    border-left-color: #222;
}
.keys .far {
    margin-top: 16px;
}
.vals {
    width: 222px;
    padding-top: 1px;
    line-height: 12.5px;
    white-space: nowrap;
}
.vals p {
    margin-top: 9px;
}
.vals .mask {
    margin-left: -5px;
    width: 160px;
    height: 13.5px;
}
.vals .v2 {
    width: 165px;
    height: 16px;
    margin-top: 4px;
}
.log-detail > span {
    padding-top: 5px;
    white-space: nowrap;
}
.copy {
    display: flex;
    align-items: center;
    justify-content: center;
    width: 21px;
    height: 21px;
    margin-left: auto;
    border: 1.5px solid #8990cc;
    border-radius: 3px;
}
.collapse {
    position: absolute;
    left: 150px;
    top: 39px;
    display: flex;
    align-items: center;
    justify-content: center;
    width: 13px;
    height: 13px;
    border-radius: 50%;
    background: #fff;
    box-shadow: 0 0 4px rgba(0, 0, 0, .25);
}
.frame {
    position: absolute;
    border: 1.5px solid #dc4632;
}
.f-log { left: 262px; top: 189px; width: 503px; height: 155px; }
.f-menu { left: 22px; top: 288px; width: 89px; height: 20px; }

/* footer */
.footer {
    display: flex;
    height: 156px;
    padding: 0 102px 0 1281px;
    justify-content: space-between;
}
.caption {
    display: flex;
    gap: 23px;
    padding-top: 33px;
    font-size: 41.6px;
    line-height: 60px;
    word-spacing: 5.5px;
    white-space: nowrap;
}
.caption svg {
    margin-top: 10px;
}
.caption span {
    letter-spacing: .75px;
}
.page {
    padding-top: 38px;
    font-size: 38px;
    line-height: 54px;
    font-weight: 700;
}
```
